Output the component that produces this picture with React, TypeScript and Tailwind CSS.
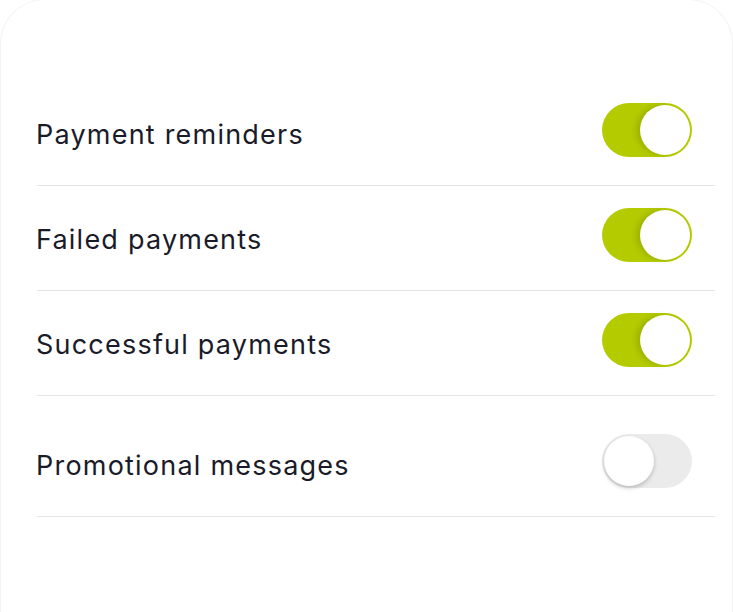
import { useState } from "react";

type Setting = {
  id: string;
  label: string;
  enabled: boolean;
};

const SETTINGS: Setting[] = [
  { id: "reminders", label: "Payment reminders", enabled: true },
  { id: "failed", label: "Failed payments", enabled: true },
  { id: "successful", label: "Successful payments", enabled: true },
  { id: "promotional", label: "Promotional messages", enabled: false },
];

function Toggle({ on, onChange }: { on: boolean; onChange: () => void }) {
  return (
    <button
      type="button"
      role="switch"
      aria-checked={on}
      onClick={onChange}
      className={`relative flex h-[54px] w-[90px] flex-shrink-0 items-center rounded-full px-[2px] transition-colors duration-150 ${
        on ? "justify-end bg-[#b4cb00]" : "justify-start bg-[#ebebeb]"
      }`}
    >
      <span
        className={`block h-[50px] w-[50px] rounded-full bg-white ${
          on
            ? "shadow-[-4px_0_5px_rgba(60,70,0,0.18)]"
            : "shadow-[0_2px_4px_rgba(0,0,0,0.22)]"
        }`}
      />
    </button>
  );
}

export default function App() {
  const [items, setItems] = useState(SETTINGS);

  const toggle = (id: string) =>
    setItems((prev) =>
      prev.map((s) => (s.id === id ? { ...s, enabled: !s.enabled } : s)),
    );

  return (
    <div
      className="min-h-[612px] w-full overflow-hidden bg-white"
      style={{ fontFamily: "Inter, 'Noto Sans', sans-serif" }}
    >
      <div className="-mt-px min-h-[613px] rounded-t-[45px] border border-b-0 border-[#f3f3f3] bg-white pt-[81px]">
        {items.map((s, i) => (
          <div key={s.id}>
            <div
              className={`flex items-center justify-between pl-[35px] pr-[40px] pb-[28px] ${
                i === items.length - 1 ? "pt-[38px]" : "pt-[22px]"
              }`}
            >
              <span className="pt-[10px] text-[27px] tracking-[0.045em] text-[#1a1b29]">
                {s.label}
              </span>
              <Toggle on={s.enabled} onChange={() => toggle(s.id)} />
            </div>
            <div className="ml-[36px] mr-[17px] h-px bg-[#e4e4e4]" />
          </div>
        ))}
      </div>
    </div>
  );
}
